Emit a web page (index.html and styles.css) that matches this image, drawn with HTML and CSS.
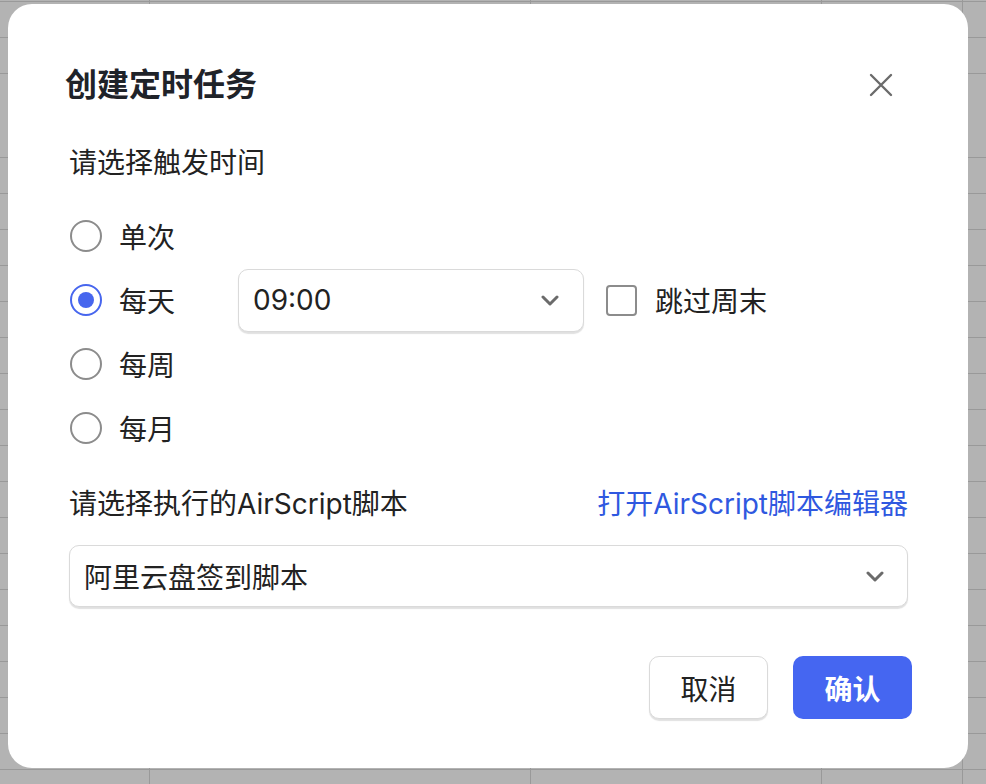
FILE: index.html
```html
<!DOCTYPE html>
<html lang="zh-CN">
	<head>
		<meta charset="UTF-8" />
		<meta name="viewport" content="width=device-width, initial-scale=1.0" />
		<title>创建定时任务</title>
		<link rel="stylesheet" href="styles.css">
	</head>
	<body>
		<!-- Spreadsheet behind the dialog -->
		<div class="sheet">
			<div class="sheet-head"></div>
			<div class="sheet-rows"></div>
		</div>

		<div class="dialog">
			<div class="dialog-header">
				<h1 class="dialog-title">创建定时任务</h1>
				<button class="close-btn" aria-label="关闭">
					<svg width="24" height="24" viewBox="0 0 24 24">
						<path d="M2 2 L22 22 M22 2 L2 22" stroke="#6b6b6b" stroke-width="2.4" stroke-linecap="round" fill="none" />
					</svg>
				</button>
			</div>

			<div class="section-label">请选择触发时间</div>

			<div class="radio-list">
				<div class="radio-row">
					<label class="radio-item"><span class="radio"></span>单次</label>
				</div>
				<div class="radio-row">
					<label class="radio-item"><span class="radio checked"></span>每天</label>
					<div class="select time-select">
						<span>09:00</span>
						<svg class="chevron" width="18" height="11" viewBox="0 0 18 11">
							<path d="M2 2 L9 9 L16 2" stroke="#6b6b6b" stroke-width="3" fill="none" stroke-linecap="round" stroke-linejoin="round" />
						</svg>
					</div>
					<label class="check-item"><span class="checkbox"></span>跳过周末</label>
				</div>
				<div class="radio-row">
					<label class="radio-item"><span class="radio"></span>每周</label>
				</div>
				<div class="radio-row">
					<label class="radio-item"><span class="radio"></span>每月</label>
				</div>
			</div>

			<div class="script-header">
				<div class="section-label">请选择执行的AirScript脚本</div>
				<a class="editor-link" href="#">打开AirScript脚本编辑器</a>
			</div>

			<div class="select script-select">
				<span>阿里云盘签到脚本</span>
				<svg class="chevron" width="18" height="11" viewBox="0 0 18 11">
					<path d="M2 2 L9 9 L16 2" stroke="#6b6b6b" stroke-width="3" fill="none" stroke-linecap="round" stroke-linejoin="round" />
				</svg>
			</div>

			<div class="dialog-footer">
				<button class="btn btn-cancel">取消</button>
				<button class="btn btn-primary">确认</button>
			</div>
		</div>
	</body>
</html>
```

FILE: styles.css
```css
body {
	margin: 0;
	width: 986px;
	height: 784px;
	overflow: hidden;
	position: relative;
	font-family: 'Inter', 'Noto Sans CJK SC', sans-serif;
	color: #222;
	background-color: #b3b3b3;
}

/* Sheet grid */
.sheet {
	display: flex;
	flex-direction: column;
	height: 784px;
	background-image: linear-gradient(90deg,
		transparent 149px, #999 149px 150px,
		transparent 150px 530px, #999 530px 531px,
		transparent 531px 821px, #999 821px 822px,
		transparent 822px 962px, #999 962px 963px,
		transparent 963px);
}

.sheet-head {
	height: 157px;
	flex-shrink: 0;
	background-image: linear-gradient(180deg,
		transparent 1px, #999 1px 2px,
		transparent 2px 37px, #999 37px 38px,
		transparent 38px 73px, #999 73px 74px,
		transparent 74px 157px);
}

.sheet-rows {
	flex-grow: 1;
	border-top: 1px solid #999;
	background-image: repeating-linear-gradient(180deg, transparent 0 35px, #999 35px 36px);
}

/* Dialog */
.dialog {
	position: absolute;
	left: 8px;
	top: 4px;
	width: 960px;
	height: 764px;
	box-sizing: border-box;
	padding: 61px 60px 0 61px;
	background-color: white;
	border-radius: 24px;
	font-size: 28px;
}

.dialog-header {
	display: flex;
	align-items: center;
	justify-content: space-between;
	height: 40px;
	margin-left: -4px;
	padding-right: 15px;
}

.dialog-title {
	margin: 0;
	font-size: 32px;
	font-weight: bold;
	color: #1f2329;
	line-height: 40px;
}

.close-btn {
	width: 24px;
	height: 24px;
	padding: 0;
	border: none;
	background: none;
	cursor: pointer;
	display: flex;
}

.section-label {
	line-height: 40px;
	margin-top: 38px;
	color: #222;
}

.radio-list {
	margin-top: 21px;
}

.radio-row {
	display: flex;
	align-items: center;
	height: 64px;
}

.radio-item {
	display: flex;
	align-items: center;
	width: 168px;
	gap: 17px;
	flex-shrink: 0;
	margin-left: 1px;
}

.radio {
	width: 32px;
	height: 32px;
	box-sizing: border-box;
	border: 2px solid #8c8c8c;
	border-radius: 50%;
	display: flex;
	align-items: center;
	justify-content: center;
}

.radio.checked {
	border-color: #4766ee;
}

.radio.checked::after {
	content: '';
	width: 16px;
	height: 16px;
	border-radius: 50%;
	background-color: #4766ee;
}

.select {
	display: flex;
	align-items: center;
	justify-content: space-between;
	box-sizing: border-box;
	border: 1.5px solid #dadada;
	border-radius: 10px;
	box-shadow: 0 1.5px 1px rgba(0, 0, 0, 0.12);
	background-color: white;
	padding: 0 24px 0 14px;
}

.time-select {
	width: 346px;
	height: 63px;
}

.check-item {
	display: flex;
	align-items: center;
	gap: 18px;
	margin-left: 22px;
}

.checkbox {
	width: 31px;
	height: 31px;
	box-sizing: border-box;
	border: 2px solid #8c8c8c;
	border-radius: 4px;
}

.script-header {
	display: flex;
	align-items: center;
	justify-content: space-between;
	margin-top: 24px;
}

.script-header .section-label {
	margin-top: 0;
}

.editor-link {
	color: #2f58e0;
	text-decoration: none;
	line-height: 40px;
}

.script-select {
	height: 62px;
	margin-top: 21px;
	padding-right: 23px;
}

.dialog-footer {
	display: flex;
	justify-content: flex-end;
	gap: 25px;
	margin-top: 49px;
	margin-right: -4px;
}

.btn {
	width: 119px;
	height: 63px;
	box-sizing: border-box;
	border-radius: 10px;
	font-family: inherit;
	font-size: 28px;
	cursor: pointer;
}

.btn-cancel {
	background-color: white;
	color: #222;
	border: 1.5px solid #dadada;
	box-shadow: 0 1.5px 1px rgba(0, 0, 0, 0.12);
}

.btn-primary {
	background-color: #4566f1;
	color: white;
	border: none;
	font-weight: bold;
}
```
